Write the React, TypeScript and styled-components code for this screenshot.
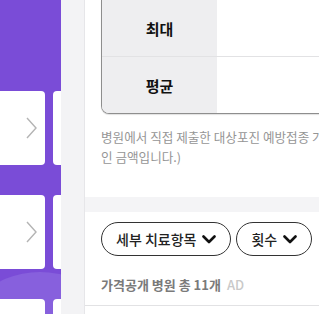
import React from "react";
import styled, { createGlobalStyle } from "styled-components";

const GlobalStyle = createGlobalStyle`
  html, body {
    margin: 0;
    padding: 0;
    background: #fff;
  }
  body {
    font-family: "Noto Sans CJK KR", "Noto Sans", sans-serif;
  }
`;

const ChevronRight = () => (
  <svg width="11" height="22" viewBox="0 0 11 22" fill="none">
    <polyline points="1,1 10,11 1,21" stroke="#b4b4b4" strokeWidth="1.4" />
  </svg>
);

const ChevronDown = () => (
  <svg width="14" height="9" viewBox="0 0 14 9" fill="none">
    <polyline
      points="1.5,1.5 7,7 12.5,1.5"
      stroke="#111"
      strokeWidth="2.6"
      strokeLinecap="round"
      strokeLinejoin="round"
    />
  </svg>
);

const App: React.FC = () => {
  const rows = ["최대", "평균"];
  const filters = ["세부 치료항목", "횟수"];

  return (
    <>
      <GlobalStyle />
      <Page>
        <LeftPane>
          <Blob />
          {[0, 1, 2].map((i) => (
            <CardRow key={i}>
              <Card>
                <ChevronRight />
              </Card>
              <SideCard />
            </CardRow>
          ))}
        </LeftPane>
        <Gutter />
        <Main>
          <TableWrap>
            <PriceTable>
              {rows.map((label) => (
                <Row key={label}>
                  <HeadCell>{label}</HeadCell>
                  <ValueCell />
                </Row>
              ))}
            </PriceTable>
          </TableWrap>
          <Note>
            <NoteLine>병원에서 직접 제출한 대상포진 예방접종 가격을 기준으로 산출한 평균적</NoteLine>
            <NoteLine>인 금액입니다.)</NoteLine>
          </Note>
          <Band />
          <Filters>
            {filters.map((f) => (
              <Pill key={f}>
                {f}
                <ChevronDown />
              </Pill>
            ))}
          </Filters>
          <CountRow>
            가격공개 병원 총 11개<Ad>AD</Ad>
          </CountRow>
        </Main>
      </Page>
    </>
  );
};

export default App;

const Page = styled.div`
  display: flex;
  width: 319px;
  height: 314px;
  overflow: hidden;
`;

const LeftPane = styled.div`
  position: relative;
  flex: none;
  width: 61px;
  background: #7a4cd7;
  overflow: hidden;
  display: flex;
  flex-direction: column;
  align-items: flex-start;
  gap: 30px;
  padding-top: 91px;
  box-sizing: border-box;
`;

const Blob = styled.div`
  position: absolute;
  left: -50px;
  top: 272px;
  width: 180px;
  height: 180px;
  border-radius: 50%;
  background: #8760dd;
`;

const CardRow = styled.div`
  position: relative;
  display: flex;
  gap: 8px;
  margin-left: -20px;
  flex: none;
`;

const Card = styled.div`
  flex: none;
  width: 65px;
  height: 74px;
  background: #fff;
  border-radius: 4px;
  display: flex;
  align-items: center;
  justify-content: flex-end;
  padding-right: 8px;
  box-sizing: border-box;
`;

const SideCard = styled.div`
  flex: none;
  width: 40px;
  height: 74px;
  background: #fff;
  border-radius: 4px;
`;

const Gutter = styled.div`
  flex: none;
  width: 23px;
  background: #f3f3f5;
  border-right: 1px solid #e6e6e9;
`;

const Main = styled.div`
  flex: 1;
  min-width: 0;
  background: #fff;
  overflow: hidden;
  display: flex;
  flex-direction: column;
`;

const TableWrap = styled.div`
  padding-left: 16px;
`;

const PriceTable = styled.div`
  width: 260px;
  border: 1px solid #8e8e8e;
  border-top: none;
  border-radius: 0 0 8px 8px;
  overflow: hidden;
  box-shadow: 0 1px 1px rgba(0, 0, 0, 0.12);
`;

const Row = styled.div`
  display: flex;
  height: 56px;
  & + & {
    border-top: 1px solid #e2e2e4;
  }
`;

const HeadCell = styled.div`
  flex: none;
  width: 115px;
  background: #eeeef0;
  display: flex;
  align-items: center;
  justify-content: center;
  font-size: 15px;
  font-weight: 700;
  color: #111;
`;

const ValueCell = styled.div`
  flex: 1;
  background: #fff;
`;

const Note = styled.div`
  margin-top: 13px;
  padding-left: 16px;
  font-size: 12.6px;
  line-height: 20px;
  color: #959595;
`;

const NoteLine = styled.div`
  white-space: nowrap;
`;

const Band = styled.div`
  margin-top: 30px;
  height: 15px;
  background: #f4f4f6;
`;

const Filters = styled.div`
  display: flex;
  gap: 5px;
  padding: 10px 0 0 16px;
`;

const Pill = styled.button`
  display: inline-flex;
  align-items: center;
  gap: 6px;
  height: 34px;
  padding: 0 14px;
  border: 1px solid #333;
  border-radius: 17px;
  background: #fff;
  font-family: "Noto Sans CJK KR", "Noto Sans", sans-serif;
  font-size: 14px;
  font-weight: 500;
  color: #222;
  white-space: nowrap;
  flex: none;
`;

const CountRow = styled.div`
  margin-top: 19px;
  padding: 0 0 10px 16px;
  border-bottom: 1px solid #e2e2e4;
  font-size: 13px;
  line-height: 20px;
  font-weight: 700;
  color: #7a7a7a;
  white-space: nowrap;
`;

const Ad = styled.span`
  margin-left: 6px;
  font-weight: 500;
  color: #c9c9c9;
`;
